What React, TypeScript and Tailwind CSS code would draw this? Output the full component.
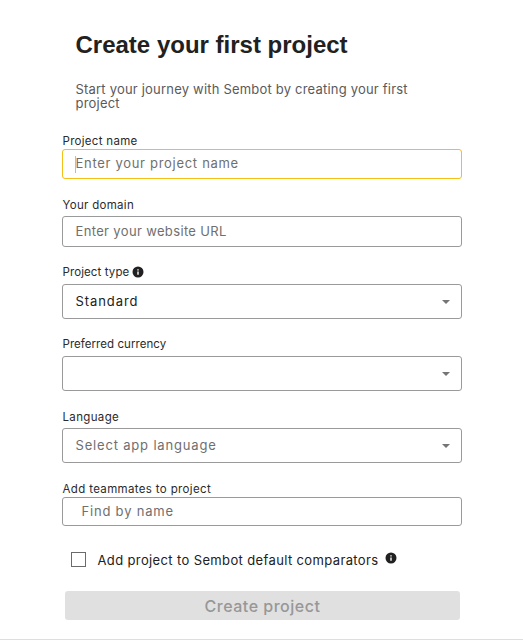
import type { ReactNode } from "react";

function InfoIcon({ className = "" }: { className?: string }) {
  return (
    <svg viewBox="0 0 24 24" className={`h-3 w-3 shrink-0 text-[#212121] ${className}`} fill="currentColor">
      <path d="M12 1a11 11 0 1 0 0 22 11 11 0 0 0 0-22zm1.400 16.600h-2.800v-6.800h2.800zm0-8.600h-2.800V6.400h2.800z" />
    </svg>
  );
}

function Label({ children, className = "" }: { children: ReactNode; className?: string }) {
  return (
    <div className={`flex h-4 items-center pl-[0.5px] whitespace-nowrap text-[11.5px] leading-4 text-[#2b2b2b] ${className}`}>
      {children}
    </div>
  );
}

function Select({ children, className = "" }: { children?: ReactNode; className?: string }) {
  return (
    <div className={`flex h-[35px] items-center justify-between rounded-[3px] border border-[#9a9a9a] pr-[11px] pl-[12.5px] text-[13px] ${className}`}>
      <span>{children}</span>
      <svg viewBox="0 0 8 4" className="h-1 w-2" fill="#757575">
        <path d="M0 0h8L4 4z" />
      </svg>
    </div>
  );
}

export default function App() {
  return (
    <main className="h-[640px] w-[523px] overflow-hidden border-b border-[#dedede] bg-white font-['Inter','Liberation_Sans',sans-serif] text-[#212121]">
      <form className="ml-[62px] w-[400px] pt-[29px]">
        <h1 className="pl-[13.5px] font-['Liberation_Sans',Arial,sans-serif] text-[24px] leading-8 font-bold">
          Create your first project
        </h1>
        <p className="mt-[21px] pr-8 pl-[13.5px] text-[13px] leading-[14px] tracking-[0.2px] text-[#5a5a5a]">
          Start your journey with Sembot by creating your first project
        </p>

        <Label className="mt-[23px] tracking-[0.3px]">Project name</Label>
        <div className="flex h-[30px] items-center rounded-[3px] border border-[#f5bf17] pl-3 text-[13px] tracking-[0.7px] text-[#6f6f6f]">
          <span className="-mr-[0.5px] h-[17px] w-px bg-[#f5bf17]" />
          Enter your project name
        </div>

        <Label className="mt-[18px] tracking-[0.3px]">Your domain</Label>
        <div className="mt-[3px] flex h-[31px] items-center rounded-[3px] border border-[#9a9a9a] pl-[12.5px] text-[13px] tracking-[0.35px] text-[#6f6f6f]">
          Enter your website URL
        </div>

        <Label className="mt-[17px] tracking-[0.1px]">
          Project type
          <InfoIcon className="ml-[3px]" />
        </Label>
        <Select className="mt-1 tracking-[0.93px]">Standard</Select>

        <Label className="mt-[17px] tracking-[0.05px]">Preferred currency</Label>
        <Select className="mt-1" />

        <Label className="mt-[18px] tracking-[0.35px]">Language</Label>
        <Select className="mt-[3px] tracking-[0.82px] text-[#6f6f6f]">Select app language</Select>

        <Label className="mt-[18px] tracking-[0.35px]">Add teammates to project</Label>
        <div className="flex h-[29px] items-center rounded-[3px] border border-[#9a9a9a] pl-[18.5px] text-[13px] tracking-[0.8px] text-[#6f6f6f]">
          Find by name
        </div>

        <div className="mt-[26px] flex h-[15px] items-center pl-[9px] text-[13px] whitespace-nowrap">
          <span className="h-[15px] w-[15px] shrink-0 border border-[#6b6b6b]" />
          <span className="mt-[2px] ml-[11.500px] tracking-[0.37px]">Add project to Sembot default comparators</span>
          <InfoIcon className="mb-1 ml-[6.500px]" />
        </div>

        <button
          type="button"
          className="mt-6 ml-[3px] flex h-[29px] w-[395px] items-center justify-center rounded-[3px] bg-[#e0e0e0] text-[16px] font-medium tracking-[0.5px] text-[#979797]"
        >
          Create project
        </button>
      </form>
    </main>
  );
}
